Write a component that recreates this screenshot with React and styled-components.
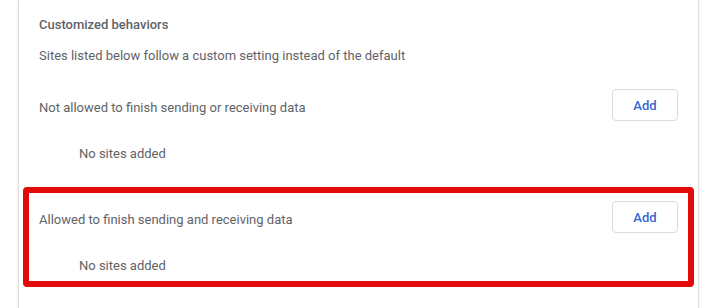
import React from 'react'
import styled, { createGlobalStyle } from 'styled-components';

const GlobalStyle = createGlobalStyle`
    html, body {
        margin : 0;
        padding : 0;
        background : #ffffff;
        font-family : Roboto, "Liberation Sans", Arial, sans-serif;
    }
`;

const Page = styled.div`
    height : 308px;
    overflow : hidden;
    padding-left : 18px;
`;

const Card = styled.div`
    width : 681px;
    min-height : 320px;
    background : #ffffff;
    border-left : 1px solid #e0e0e0;
    border-right : 1px solid #e0e0e0;
    box-shadow : 0 0 3px rgba(0,0,0,.12);
    box-sizing : border-box;
    padding : 0 20px;
    color : #5f6368;
    font-size : 13px;
`;

const Title = styled.div`
    font-weight : 500;
    line-height : 20px;
    padding : 15px 0 13px;
`;

const Subtitle = styled.div`
    line-height : 16px;
`;

const Category = styled.div`
    margin : ${props => props.highlighted ? '18px -16px 0' : '17px 0 0'};
    padding : ${props => props.highlighted ? '0 10px' : '0'};
    border : ${props => props.highlighted ? '6px solid #e30a0a' : 'none'};
    border-radius : 4px;
`;

const CategoryRow = styled.div`
    display : flex;
    align-items : center;
    justify-content : space-between;
    min-height : 48px;
`;

const CategoryLabel = styled.div`
    line-height : 20px;
    padding-top : 6px;
`;

const AddButton = styled.button`
    width : 66px;
    height : 32px;
    background : #ffffff;
    border : 1px solid #dadce0;
    border-radius : 4px;
    color : #3367d6;
    font-family : inherit;
    font-size : 13px;
    font-weight : 500;
    padding : 0;
    cursor : pointer;
`;

const EmptyList = styled.div`
    line-height : 20px;
    padding : 15px 0 5px 40px;
`;

const categories = [
    { label : 'Not allowed to finish sending or receiving data', highlighted : false },
    { label : 'Allowed to finish sending and receiving data', highlighted : true },
];

const App = () => {
    return (
        <Page>
            <GlobalStyle />
            <Card>
                <Title>Customized behaviors</Title>
                <Subtitle>Sites listed below follow a custom setting instead of the default</Subtitle>
                {categories.map(item => (
                    <Category key={item.label} highlighted={item.highlighted}>
                        <CategoryRow>
                            <CategoryLabel>{item.label}</CategoryLabel>
                            <AddButton>Add</AddButton>
                        </CategoryRow>
                        <EmptyList>No sites added</EmptyList>
                    </Category>
                ))}
            </Card>
        </Page>
    )
}

export default App
